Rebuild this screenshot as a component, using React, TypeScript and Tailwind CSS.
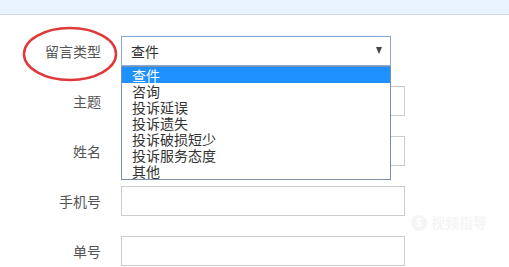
import React from 'react';

const fields = ['主题', '姓名', '手机号', '单号'];
const options = ['查件', '咨询', '投诉延误', '投诉遗失', '投诉破损短少', '投诉服务态度', '其他'];

export default function App() {
  return (
    <div
      className="relative w-[509px] h-[267px] overflow-hidden bg-white text-[14px]"
      style={{ fontFamily: '"Noto Sans CJK SC", "Noto Sans", sans-serif' }}
    >
      <div className="h-[15px] bg-[#eaf4fe] border-b border-[#c9d9ea]" />

      <div className="flex flex-col gap-[20px] mt-[21px]">
        {/* select row */}
        <div className="flex items-center h-[30px]">
          <div className="relative w-[101px] text-right text-[#555]">
            留言类型
            <svg className="absolute left-[22px] top-[-15px]" width="98" height="56" viewBox="0 0 98 56">
              <ellipse cx="48" cy="28" rx="46" ry="26" fill="none" stroke="#e0393a" strokeWidth="2.5" />
            </svg>
          </div>
          <div className="relative ml-[20px] w-[270px] h-[30px] border border-[#86a9dc] bg-white flex items-center pl-[9px] text-[#333]">
            查件
            <span className="absolute right-[8px] top-[10px] w-0 h-0 border-l-[3.5px] border-r-[3.5px] border-t-[7px] border-l-transparent border-r-transparent border-t-[#444]" />
            <div className="absolute left-[-1px] top-[29px] w-[270px] h-[114px] border border-[#7d8ea8] bg-white z-10">
              {options.map((o, i) => (
                <div
                  key={o}
                  className={
                    'h-[16px] leading-[16px] pl-[10px] ' +
                    (i === 0 ? 'bg-[#1e90ff] text-white' : 'text-[#333]')
                  }
                >
                  {o}
                </div>
              ))}
            </div>
          </div>
        </div>

        {fields.map((f) => (
          <div key={f} className="flex items-center h-[30px]">
            <div className="w-[101px] text-right text-[#555]">{f}</div>
            <div className="ml-[20px] w-[284px] h-[30px] border border-[#cccccc] bg-white" />
          </div>
        ))}
      </div>

      <div className="absolute left-[411px] top-[212px] flex items-center gap-[4px] text-[#f5f5f5] text-[14px] font-bold">
        <span className="w-[16px] h-[16px] rounded-full bg-[#f5f5f5] text-white text-[11px] flex items-center justify-center">S</span>
        视频指导
      </div>
    </div>
  );
}
